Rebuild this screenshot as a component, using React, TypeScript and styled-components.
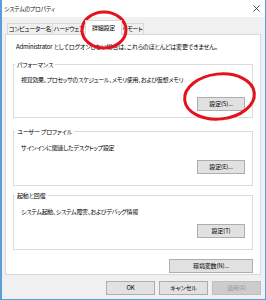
import { createGlobalStyle, styled } from "styled-components";

const GlobalStyle = createGlobalStyle`
  html, body {
    margin: 0;
    padding: 0;
    background: #fff;
  }
  body {
    font-family: "Noto Sans CJK JP", "Noto Sans", sans-serif;
  }
`;

// ダイアログ本体
const Window = styled.div`
  position: relative;
  width: 266px;
  height: 300px;
  box-sizing: border-box;
  border: 1px solid #5a9ddb;
  border-left-width: 2px;
  border-top: none;
  background: #f0f0f0;
  display: flex;
  flex-direction: column;
  font-size: 6px;
  letter-spacing: -0.15px;
  color: #000;
  font-feature-settings: "palt";
  overflow: hidden;
`;

const TitleBar = styled.div`
  height: 17px;
  flex: none;
  background: #fff;
  display: flex;
  align-items: center;
  justify-content: space-between;
  padding: 0 5px 0 2px;
  .title {
    line-height: 1;
    color: #111;
    font-size: 5.8px;
  }
`;

const Body = styled.div`
  flex: 1;
  display: flex;
  flex-direction: column;
  padding: 0 4px 0 3px;
`;

const TabRow = styled.div`
  height: 17px;
  display: flex;
  align-items: flex-end;
  padding-left: 2px;
`;

const Tab = styled.div<{ $active?: boolean; $w: number }>`
  position: relative;
  box-sizing: border-box;
  width: ${(p) => p.$w}px;
  height: ${(p) => (p.$active ? 15 : 11)}px;
  margin-left: -1px;
  margin-bottom: ${(p) => (p.$active ? -1 : 0)}px;
  z-index: ${(p) => (p.$active ? 1 : 0)};
  border: 1px solid #d9d9d9;
  border-bottom: none;
  background: ${(p) => (p.$active ? "#fff" : "#f0f0f0")};
  display: flex;
  align-items: center;
  justify-content: center;
  white-space: nowrap;
  line-height: 1;
  letter-spacing: -0.3px;
  &:first-child {
    margin-left: 0;
  }
`;

const Panel = styled.div`
  height: 241px;
  box-sizing: border-box;
  background: #fff;
  border: 1px solid #d9d9d9;
  padding: 7px 7px 0 7px;
  display: flex;
  flex-direction: column;
`;

const Notice = styled.p`
  margin: 0;
  padding-left: 3px;
  line-height: 10px;
  white-space: nowrap;
`;

const Group = styled.fieldset<{ $top: number }>`
  margin: ${(p) => p.$top}px 0 0 0;
  padding: 0;
  border: 1px solid #dcdcdc;
  min-inline-size: 0;
  legend {
    margin-left: 1px;
    padding: 0 2px;
    line-height: 9px;
  }
`;

const GroupBody = styled.div<{ $pt: number; $pb: number }>`
  padding: ${(p) => p.$pt}px 7px ${(p) => p.$pb}px 7px;
  display: flex;
  flex-direction: column;
  .desc {
    line-height: 10px;
    white-space: nowrap;
    letter-spacing: -0.3px;
  }
`;

const ButtonRow = styled.div<{ $mt: number }>`
  display: flex;
  justify-content: flex-end;
  margin-top: ${(p) => p.$mt}px;
`;

const Button = styled.button<{ $w: number; $off?: boolean }>`
  width: ${(p) => p.$w}px;
  height: 14px;
  box-sizing: border-box;
  padding: 0;
  border: 1px solid ${(p) => (p.$off ? "#bfbfbf" : "#adadad")};
  background: ${(p) => (p.$off ? "#cccccc" : "#e1e1e1")};
  color: ${(p) => (p.$off ? "#9a9a9a" : "#000")};
  font-family: inherit;
  font-size: 6px;
  letter-spacing: -0.15px;
  font-feature-settings: "palt";
  line-height: 1;
`;

const EnvRow = styled.div`
  display: flex;
  justify-content: flex-end;
  margin-top: 9px;
`;

const Footer = styled.div`
  display: flex;
  justify-content: flex-end;
  gap: 4px;
  padding-top: 6px;
`;

const Marks = styled.svg`
  position: absolute;
  left: -2px;
  top: 0;
  pointer-events: none;
`;

const CloseIcon = () => (
  <svg width="7" height="7" viewBox="0 0 7 7">
    <path d="M0.5 0.5 L6.5 6.5 M6.5 0.5 L0.5 6.5" stroke="#444" strokeWidth="0.9" />
  </svg>
);

export default function App() {
  return (
    <>
      <GlobalStyle />
      <Window>
        <TitleBar>
          <span className="title">システムのプロパティ</span>
          <CloseIcon />
        </TitleBar>
        <Body>
          <TabRow>
            <Tab $w={46}>コンピューター名</Tab>
            <Tab $w={34}>ハードウェア</Tab>
            <Tab $w={37} $active>
              詳細設定
            </Tab>
            <Tab $w={23}>リモート</Tab>
          </TabRow>
          <Panel>
            <Notice>
              Administrator としてログオンしない場合は、これらのほとんどは変更できません。
            </Notice>

            <Group $top={8}>
              <legend>パフォーマンス</legend>
              <GroupBody $pt={6} $pb={6}>
                <span className="desc">
                  視覚効果、プロセッサのスケジュール、メモリ使用、および仮想メモリ
                </span>
                <ButtonRow $mt={12}>
                  <Button $w={48}>設定(S)...</Button>
                </ButtonRow>
              </GroupBody>
            </Group>

            <Group $top={9}>
              <legend>ユーザー プロファイル</legend>
              <GroupBody $pt={7} $pb={11}>
                <span className="desc">サインインに関連したデスクトップ設定</span>
                <ButtonRow $mt={7}>
                  <Button $w={48}>設定(E)...</Button>
                </ButtonRow>
              </GroupBody>
            </Group>

            <Group $top={5}>
              <legend>起動と回復</legend>
              <GroupBody $pt={7} $pb={11}>
                <span className="desc">
                  システム起動、システム障害、およびデバッグ情報
                </span>
                <ButtonRow $mt={7}>
                  <Button $w={48}>設定(T)</Button>
                </ButtonRow>
              </GroupBody>
            </Group>

            <EnvRow>
              <Button $w={84}>環境変数(N)...</Button>
            </EnvRow>
          </Panel>
          <Footer>
            <Button $w={49}>OK</Button>
            <Button $w={49}>キャンセル</Button>
            <Button $w={49} $off>
              適用(A)
            </Button>
          </Footer>
        </Body>
        <Marks width="266" height="300" viewBox="0 0 266 300">
          <ellipse cx="104" cy="30" rx="22" ry="18" fill="none" stroke="#e4121c" strokeWidth="3" />
          <ellipse
            cx="219.5"
            cy="96.5"
            rx="35"
            ry="22.5"
            fill="none"
            stroke="#e4121c"
            strokeWidth="3"
            transform="rotate(-6 219.5 96.5)"
          />
        </Marks>
      </Window>
    </>
  );
}
